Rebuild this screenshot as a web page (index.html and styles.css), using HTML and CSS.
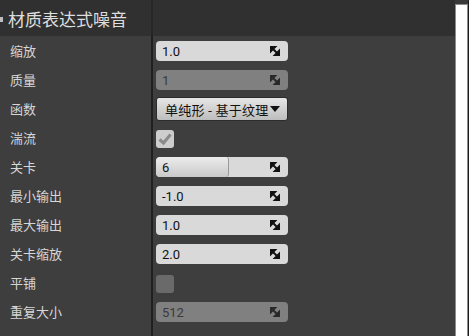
FILE: index.html
```html
<!DOCTYPE html>
<html lang="zh-CN">
<head>
	<meta charset="utf-8">
	<title>材质表达式噪音</title>
	<link rel="stylesheet" href="styles.css">
</head>
<body>
	<div id="panel">
		<div id="main">
			<div class="header">
				<span class="collapse"></span>
				<span class="title">材质表达式噪音</span>
			</div>
			<div class="row">
				<span class="label">缩放</span>
				<div class="field"><span class="num">1.0</span><svg class="grip" viewBox="0 0 10 10"><path d="M0 0H6L0 6Z M10 4V10H4Z M2 2L8 8" /></svg></div>
			</div>
			<div class="row">
				<span class="label">质量</span>
				<div class="field disabled"><span class="num">1</span><svg class="grip" viewBox="0 0 10 10"><path d="M0 0H6L0 6Z M10 4V10H4Z M2 2L8 8" /></svg></div>
			</div>
			<div class="row">
				<span class="label">函数</span>
				<div class="combo"><span class="combo-text">单纯形 - 基于纹理</span><span class="arrow"></span></div>
			</div>
			<div class="row">
				<span class="label">湍流</span>
				<div class="check on"><svg viewBox="0 0 18 18"><path d="M3.5 9.5L7.5 13L14.5 4.5" /></svg></div>
			</div>
			<div class="row">
				<span class="label">关卡</span>
				<div class="field slider"><div class="fill" style="width: 72px"></div><span class="num">6</span><svg class="grip" viewBox="0 0 10 10"><path d="M0 0H6L0 6Z M10 4V10H4Z M2 2L8 8" /></svg></div>
			</div>
			<div class="row">
				<span class="label">最小输出</span>
				<div class="field"><span class="num">-1.0</span><svg class="grip" viewBox="0 0 10 10"><path d="M0 0H6L0 6Z M10 4V10H4Z M2 2L8 8" /></svg></div>
			</div>
			<div class="row">
				<span class="label">最大输出</span>
				<div class="field"><span class="num">1.0</span><svg class="grip" viewBox="0 0 10 10"><path d="M0 0H6L0 6Z M10 4V10H4Z M2 2L8 8" /></svg></div>
			</div>
			<div class="row">
				<span class="label">关卡缩放</span>
				<div class="field"><span class="num">2.0</span><svg class="grip" viewBox="0 0 10 10"><path d="M0 0H6L0 6Z M10 4V10H4Z M2 2L8 8" /></svg></div>
			</div>
			<div class="row">
				<span class="label">平铺</span>
				<div class="check off"></div>
			</div>
			<div class="row">
				<span class="label">重复大小</span>
				<div class="field disabled"><span class="num">512</span><svg class="grip" viewBox="0 0 10 10"><path d="M0 0H6L0 6Z M10 4V10H4Z M2 2L8 8" /></svg></div>
			</div>
		</div>
		<div id="scrollbar"><div class="thumb"></div></div>
	</div>
</body>
</html>
```

FILE: styles.css
```css
html, body {
	margin: 0;
	height: 100%;
}
body {
	background: #3e3e3e;
	font-family: "Noto Sans CJK SC", "Noto Sans", sans-serif;
	overflow: hidden;
}
#panel {
	display: flex;
	height: 336px;
	background: #1c1c1c;
}
#main {
	width: 455px;
	background:
		linear-gradient(to right, transparent 151px, #202020 151px, #202020 153px, transparent 153px),
		#3e3e3e;
}
.header {
	height: 36px;
	display: flex;
	align-items: center;
	background:
		linear-gradient(to right, transparent 151px, #262626 151px, #262626 153px, transparent 153px),
		#303030;
}
.collapse {
	width: 3px;
	height: 5px;
	background: #bdbdbd;
	margin-right: 5px;
	margin-top: 2px;
}
.title {
	font-size: 17px;
	color: #dedede;
	line-height: 1;
}
.row {
	height: 29px;
	display: flex;
	align-items: center;
}
.label {
	width: 146px;
	padding-left: 10px;
	font-size: 13px;
	color: #d6d6d6;
}
.field {
	position: relative;
	box-sizing: border-box;
	width: 132px;
	height: 20px;
	margin-top: 1px;
	border-radius: 4px;
	background: #d9d9d9;
	display: flex;
	align-items: center;
	padding: 0 8px 0 6px;
	overflow: hidden;
}
.field .num {
	flex: 1;
	font-family: Roboto, "Noto Sans", sans-serif;
	font-size: 13px;
	color: #111;
	position: relative;
}
.field.disabled {
	background: #808080;
}
.field.disabled .num {
	color: #3a3a3a;
}
.grip {
	width: 10px;
	height: 10px;
	position: relative;
}
.grip path {
	fill: #111;
	stroke: #111;
	stroke-width: 2;
}
.field.disabled .grip path {
	fill: #2a2a2a;
	stroke: #2a2a2a;
}
.slider .fill {
	position: absolute;
	left: 0;
	top: 0;
	bottom: 0;
	background: linear-gradient(#ececec, #c9c9c9);
	border-right: 1px solid #9a9a9a;
	border-radius: 4px 3px 3px 4px;
}
.combo {
	box-sizing: border-box;
	width: 132px;
	height: 24px;
	margin-top: 1px;
	border: 1px solid #2c2c2c;
	border-radius: 3px;
	background: linear-gradient(#e6e6e6, #bdbdbd);
	display: flex;
	align-items: center;
	gap: 2px;
	padding: 0 9px 0 8px;
	font-size: 13px;
	color: #111;
	white-space: nowrap;
}
.combo-text {
	flex: 1;
	letter-spacing: 0.2px;
}
.arrow {
	width: 0;
	height: 0;
	border-left: 5px solid transparent;
	border-right: 5px solid transparent;
	border-top: 6px solid #111;
}
.check {
	width: 18px;
	height: 18px;
	border-radius: 3px;
	margin-top: 2px;
}
.check.on {
	background: #cdcdcd;
}
.check.on svg {
	width: 18px;
	height: 18px;
	display: block;
}
.check.on path {
	fill: none;
	stroke: #8a8a8a;
	stroke-width: 3;
}
.check.off {
	background: #6a6a6a;
}
#scrollbar {
	width: 13px;
	padding-top: 4px;
	background: #3a3a3a;
	border-right: 1px solid #1c1c1c;
}
.thumb {
	height: 100%;
	box-sizing: border-box;
	background: #fff;
	border: 1px solid #8c8c8c;
	border-bottom: none;
}
```
